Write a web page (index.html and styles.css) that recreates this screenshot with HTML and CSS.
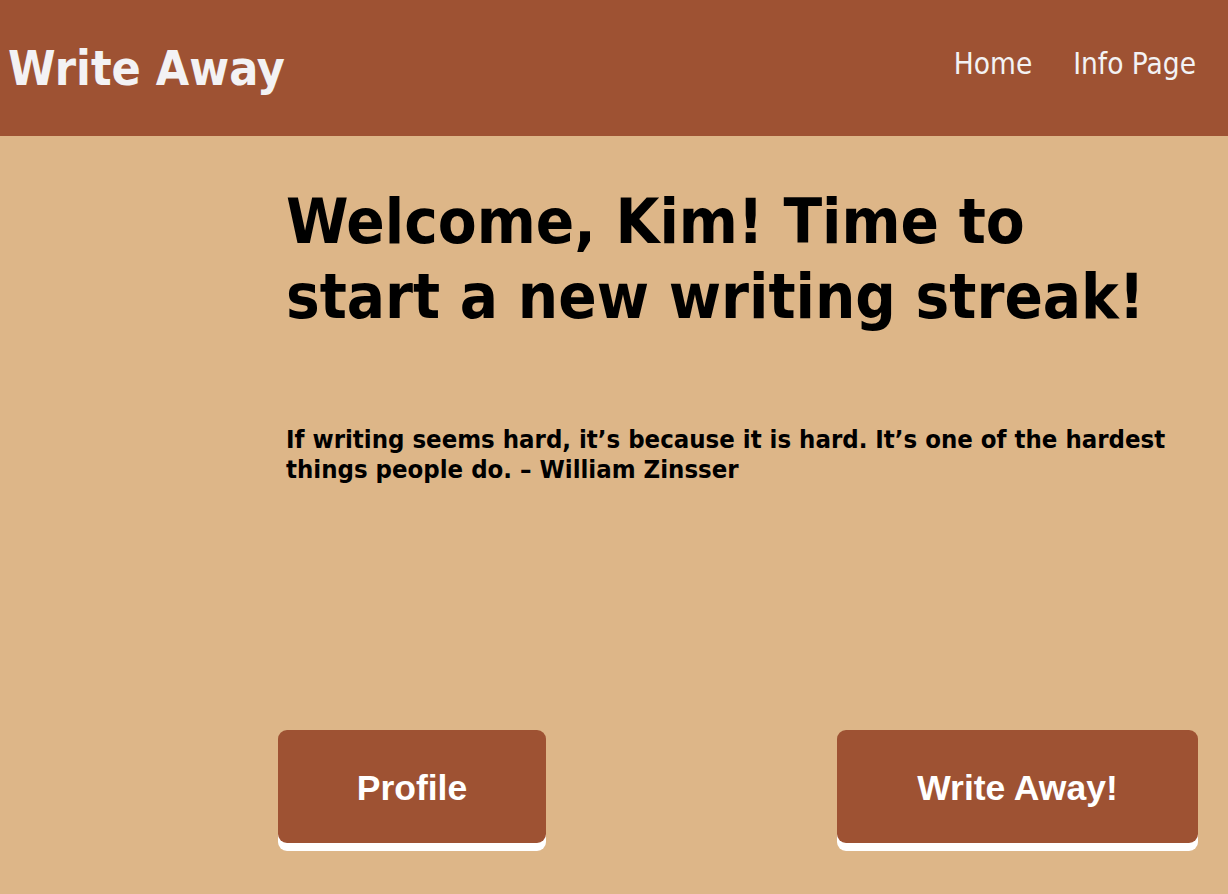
FILE: index.html
```html
<!DOCTYPE html>
<html lang="en">
<head>
<meta charset="utf-8">
<title>Write Away</title>
<link rel="stylesheet" href="styles.css">
</head>
<body>
<header class="topbar">
  <h1 class="brand">Write Away</h1>
  <nav class="nav">
    <a class="nav-link" href="#">Home</a>
    <a class="nav-link" href="#">Info Page</a>
  </nav>
</header>
<main class="main">
  <h2 class="welcome">Welcome, Kim! Time to start a new writing streak!</h2>
  <p class="quote">If writing seems hard, it’s because it is hard. It’s one of the hardest things people do. – William Zinsser</p>
  <div class="actions">
    <a class="btn btn-profile" href="#">Profile</a>
    <a class="btn btn-write" href="#">Write Away!</a>
  </div>
</main>
</body>
</html>
```

FILE: styles.css
```css
html, body {
  margin: 0;
  padding: 0;
}
body {
  background: #ddb688;
  font-family: "DejaVu Sans", Verdana, sans-serif;
  font-stretch: condensed;
  width: 1228px;
  height: 894px;
  overflow: hidden;
}
.topbar {
  height: 136px;
  background: #9e5233;
  display: flex;
  align-items: center;
  justify-content: space-between;
  padding: 0 32px 0 8px;
  box-sizing: border-box;
}
.brand {
  margin: 0;
  color: #f3f2f4;
  font-size: 48px;
  font-weight: bold;
  line-height: 1;
  padding-top: 0;
}
.nav {
  display: flex;
  gap: 41px;
  margin-top: -8px;
}
.nav-link {
  color: #f3f2f4;
  text-decoration: none;
  font-size: 29.5px;
  font-weight: normal;
}
.main {
  margin-left: 278px;
  width: 920px;
  display: flex;
  flex-direction: column;
}
.welcome {
  margin: 48px 0 0 8px;
  width: 900px;
  font-size: 63px;
  line-height: 75px;
  font-weight: bold;
  color: #000;
}
.quote {
  margin: 90px 0 0 8px;
  width: 905px;
  font-size: 25.5px;
  line-height: 30px;
  font-weight: bold;
  color: #000;
}
.actions {
  display: flex;
  justify-content: space-between;
  margin-top: 246px;
}
.btn {
  display: flex;
  align-items: center;
  justify-content: center;
  height: 113px;
  background: #9e5233;
  color: #fff;
  border-radius: 9px;
  box-shadow: 0 8px 0 #fff;
  text-decoration: none;
  font-family: "Liberation Sans", Arial, sans-serif;
  font-stretch: normal;
  font-weight: bold;
  font-size: 35.5px;
  padding-top: 4px;
  box-sizing: border-box;
}
.btn-profile {
  width: 268px;
}
.btn-write {
  width: 361px;
}
```
